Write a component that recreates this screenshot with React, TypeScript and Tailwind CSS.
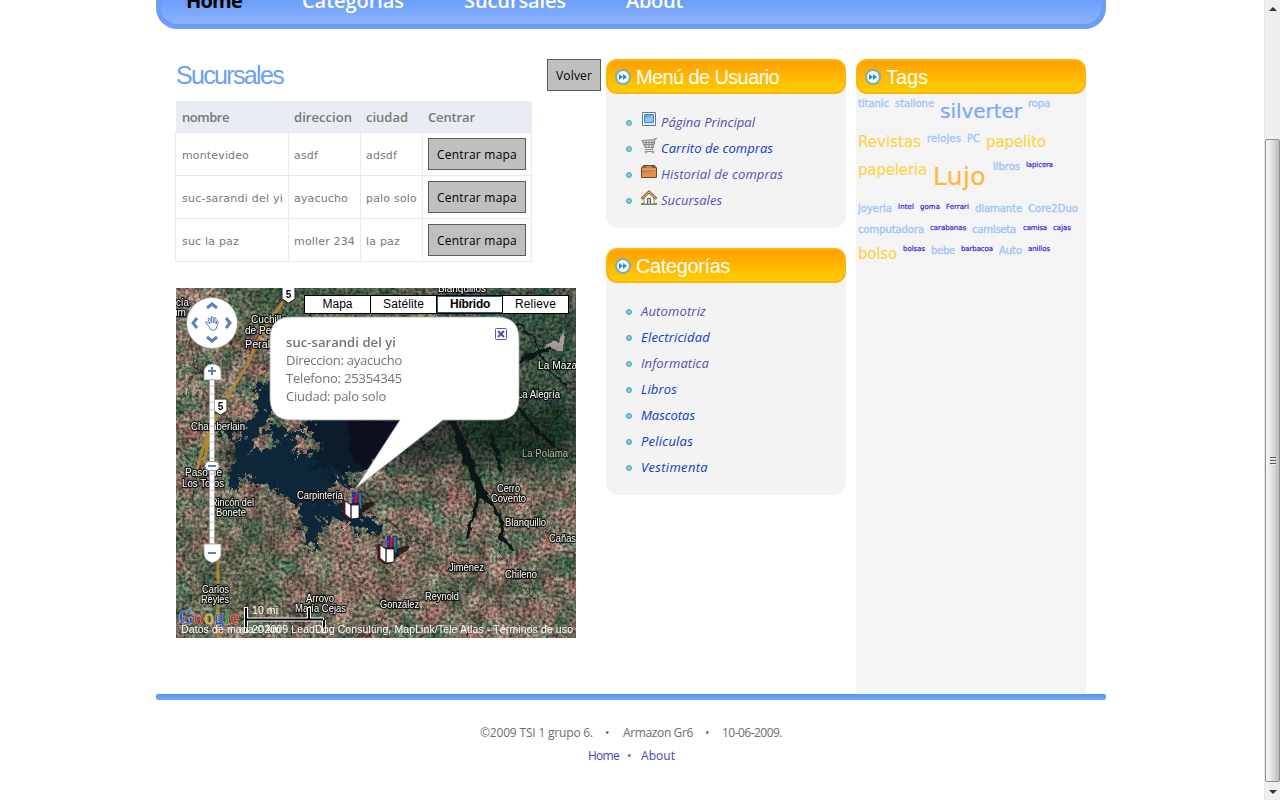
import { useLayoutEffect, useRef, useState } from "react";
import type { ReactNode } from "react";

const HUMAN = "font-['Open_Sans','Noto_Sans',sans-serif]";
const VERDANA = "font-['DejaVu_Sans',sans-serif]";
const ARIAL = "font-['Liberation_Sans',Arial,sans-serif]";

/** Text tracked so that it fills a given width. */
function Fit({ w, children, className = "" }: { w: number; children: string; className?: string }) {
  const ref = useRef<HTMLSpanElement>(null);
  const [spacing, setSpacing] = useState(0);
  useLayoutEffect(() => {
    if (ref.current) {
      const natural = ref.current.getBoundingClientRect().width;
      setSpacing((w - natural) / children.length);
    }
  }, []);
  return (
    <span ref={ref} className={`inline-block whitespace-pre ${className}`} style={{ letterSpacing: `${spacing}px` }}>
      {children}
    </span>
  );
}

function GreyButton({ w, children }: { w: number; children: string }) {
  return (
    <button className={`flex h-8 items-center border border-[#5c5c5c] bg-[#bfbfbf] px-2 pt-[2px] text-[12px] text-black ${HUMAN}`}>
      <Fit w={w}>{children}</Fit>
    </button>
  );
}

const branches = [
  { name: ["montevideo", 67], dir: ["asdf", 24], city: ["adsdf", 31] },
  { name: ["suc-sarandi del yi", 101], dir: ["ayacucho", 54], city: ["palo solo", 51] },
  { name: ["suc la paz", 57], dir: ["moller 234", 61], city: ["la paz", 34] },
] as { name: [string, number]; dir: [string, number]; city: [string, number] }[];

function BranchTable() {
  const cell = "border border-[#e6ebf1] p-0 pt-[5px] pl-[5px]";
  return (
    <table className={`mt-[7px] -ml-px w-[356px] table-fixed border-collapse text-[#7b7773] ${VERDANA}`}>
      <colgroup>
        <col className="w-[113px]" />
        <col className="w-[72px]" />
        <col className="w-[62px]" />
        <col className="w-[109px]" />
      </colgroup>
      <thead>
        <tr className={`h-[31px] bg-[#e8edf4] text-left text-[13px] ${HUMAN}`}>
          <th className="p-0 pt-[3px] pl-[6.5px] font-semibold"><Fit w={47}>nombre</Fit></th>
          <th className="p-0 pt-[3px] pl-[5.5px] font-semibold"><Fit w={58}>direccion</Fit></th>
          <th className="p-0 pt-[3px] pl-[5.5px] font-semibold"><Fit w={42}>ciudad</Fit></th>
          <th className="p-0 pt-[3px] pl-[5.5px] font-semibold"><Fit w={47}>Centrar</Fit></th>
        </tr>
      </thead>
      <tbody>
        {branches.map((b) => (
          <tr key={b.name[0]} className="h-[43px] text-[11px]">
            <td className="border border-[#e6ebf1] p-0 pt-[5px] pl-[6px]"><Fit w={b.name[1]}>{b.name[0]}</Fit></td>
            <td className={cell}><Fit w={b.dir[1]}>{b.dir[0]}</Fit></td>
            <td className={cell}><Fit w={b.city[1]}>{b.city[0]}</Fit></td>
            <td className="border border-[#e6ebf1] p-0 pl-[5px]"><GreyButton w={80}>Centrar mapa</GreyButton></td>
          </tr>
        ))}
      </tbody>
    </table>
  );
}

const places: [string, number, number, number][] = [
  ["cía", 0, 18, 13],
  ["um", -4, 28, 14],
  ["Cuchilla", 75, 35, 36],
  ["de Peralta", 69, 46, 46],
  ["Peralta", 69, 60, 34],
  ["Blanquillos", 262, 4, 48],
  ["La Mazamorra", 362, 81, 66],
  ["La Alegría", 341, 110, 43],
  ["La Polama", 346, 169, 46],
  ["Chamberlain", 15, 142, 54],
  ["Paso de", 9, 188, 37],
  ["Los Toros", 6, 199, 42],
  ["Rincón del", 35, 218, 43],
  ["Bonete", 40, 228, 30],
  ["Carpintería", 121, 211, 46],
  ["Cerro", 321, 204, 23],
  ["Covento", 315, 214, 35],
  ["Blanquillo", 329, 238, 41],
  ["Cañas", 373, 254, 27],
  ["Jiménez", 273, 283, 35],
  ["Chileno", 329, 290, 32],
  ["Reynold", 249, 312, 34],
  ["González", 204, 320, 39],
  ["Carlos", 26, 305, 27],
  ["Reyles", 25, 315, 28],
  ["Arroyo", 130, 314, 28],
  ["María Cejas", 119, 324, 51],
];

function Books({ x, y }: { x: number; y: number }) {
  return (
    <g transform={`translate(${x} ${y})`}>
      <path d="M17 16q5-5 14-5 2 3-6 7l-10 7z" fill="#11100f" opacity=".8" />
      <path d="M9 1h4v16H9z" fill="#1735b8" />
      <path d="M12 3h3v14h-3z" fill="#cc1d22" />
      <path d="M15 1h4v17h-4z" fill="#167d96" stroke="#111" strokeWidth=".7" />
      <path d="M9 7h2M15 5h3" stroke="#a31fc5" strokeWidth="2" />
      <path d="M0 9l7 4 9-1v15l-9 2-7-5z" fill="#8d0a16" stroke="#111" strokeWidth=".7" />
      <path d="M2 10l6 4v14l-6-5zM8 14h8v13l-8 1z" fill="#fff" stroke="#111" strokeWidth=".8" />
    </g>
  );
}

function Shield({ x, y }: { x: number; y: number }) {
  return (
    <g transform={`translate(${x} ${y})`}>
      <path d="M0 1h13v12l-6.5 4L0 13z" fill="#fff" stroke="#222" />
      <text x="6.5" y="12" textAnchor="middle" fontSize="10" fontWeight="700">5</text>
    </g>
  );
}

function Terrain() {
  return (
    <svg className="absolute inset-0 font-['Liberation_Sans',Arial,sans-serif]" width="400" height="350" viewBox="0 0 400 350">
      <defs>
        <filter id="tint" x="0" y="0" width="100%" height="100%" colorInterpolationFilters="sRGB">
          <feTurbulence type="fractalNoise" baseFrequency=".045" numOctaves="6" seed="8" />
          <feColorMatrix values=".6 .05 0 0 .1  .2 .28 0 0 .16  .27 .2 0 0 .11  0 0 0 0 1" />
        </filter>
        <filter id="grain" x="0" y="0" width="100%" height="100%" colorInterpolationFilters="sRGB">
          <feTurbulence type="fractalNoise" baseFrequency=".3" numOctaves="4" seed="3" />
          <feColorMatrix values="2 .5 0 0 -.7  1.6 .9 0 0 -.7  1.8 .5 .2 0 -.7  0 0 0 0 1" />
        </filter>
        <filter id="rough" x="-10%" y="-10%" width="120%" height="120%">
          <feTurbulence type="fractalNoise" baseFrequency=".13" numOctaves="4" seed="5" />
          <feDisplacementMap in="SourceGraphic" scale="26" xChannelSelector="R" yChannelSelector="G" />
        </filter>
        <filter id="thin" x="-20%" y="-20%" width="140%" height="140%">
          <feTurbulence type="fractalNoise" baseFrequency=".1" numOctaves="3" seed="2" />
          <feDisplacementMap in="SourceGraphic" scale="9" xChannelSelector="R" yChannelSelector="G" />
        </filter>
        <filter id="soft" x="-30%" y="-30%" width="160%" height="160%">
          <feGaussianBlur stdDeviation="14" />
        </filter>
        <linearGradient id="goog" x1="0" x2="1">
          <stop offset="0" stopColor="#2457d6" />
          <stop offset=".24" stopColor="#2457d6" />
          <stop offset=".25" stopColor="#d92a22" />
          <stop offset=".42" stopColor="#d92a22" />
          <stop offset=".43" stopColor="#e8b20c" />
          <stop offset=".6" stopColor="#e8b20c" />
          <stop offset=".61" stopColor="#2457d6" />
          <stop offset=".76" stopColor="#2457d6" />
          <stop offset=".77" stopColor="#25a03a" />
          <stop offset=".84" stopColor="#25a03a" />
          <stop offset=".85" stopColor="#d92a22" />
        </linearGradient>
      </defs>
      <rect width="400" height="350" filter="url(#tint)" />
      <g filter="url(#soft)">
        <path d="M260-10H410V185H300z" fill="#0c3022" opacity=".5" />
        <path d="M60-20H240V32H60z" fill="#244e31" opacity=".6" />
        <path d="M210 120h190v45l-190 20z" fill="#071310" opacity=".6" />
        <path d="M15 240h90v100H15z" fill="#304c37" opacity=".35" />
        <path d="M130 255h110v65H130z" fill="#a06e60" opacity=".2" />
      </g>
      <rect width="400" height="350" filter="url(#grain)" opacity=".5" className="mix-blend-overlay" />
      <g filter="url(#rough)">
        <path
          d="M90 96L86 128 72 148 64 172 56 200M58 162L78 178 104 196 128 214M72 176L100 164 118 176 146 168M100 194L138 186 156 196M126 210L134 236 138 258M126 212L152 220 176 232 204 240M116 168L108 150 94 140"
          fill="none" stroke="#0e2637" strokeWidth="14" strokeLinejoin="round"
        />
        <path d="M58 168l26-6 30 8 36-6 24 4-14 20-10 22-14 14-16-6-14-18-26-4-20-14z" fill="#0e2637" />
        <path d="M134 118H232l-5 31-22 27-31 10-21 4-17-16 10-16-14-18z" fill="#0b1d2c" />
        <path d="M60 150L44 142M112 150l14-8M150 176l24 22M140 238l14-10M176 232l10 12M88 112l14-10" fill="none" stroke="#0e2637" strokeWidth="7" />
      </g>
      <path d="M172 132h51l-34 50-14-14z" fill="#080e1b" opacity=".8" filter="url(#thin)" />
      <g filter="url(#thin)" fill="none" stroke="#111815" strokeLinecap="round">
        <path d="M278 133l13 38 15 35" strokeWidth="8" />
        <path d="M304 203l-7 27-5 20M306 206l17 20 3 24 9 10" strokeWidth="4" />
        <path d="M315 148l11 35M270 60l26 12 11-3 32 4 45-14M316 76l23 36 16 25 23 20" strokeWidth="4" />
        <path d="M334 32l23 15 13 30 20 22M231 137l23 23" strokeWidth="2" />
        <path d="M185 224l28 9 22 19 20 8" strokeWidth="1.5" opacity=".6" />
      </g>
      <g fill="none" stroke="#1a201a" opacity=".75" filter="url(#thin)">
        <path d="M20 30l-5 24 4 30-12 27M19 87L36 73M0 160l21 19-4 33M160 190l21 11 12 18" />
        <path d="M85 245l14 12M320 256l20 35 20 20M380 10l20 38M358 100l42 34M111 350l18-35M190 350l24-31" />
      </g>
      <g fill="none" stroke="#b08b32" strokeWidth="3" opacity=".9">
        <path d="M107 14Q80 51 73 74L54 105 34 141 28 175M31 146L20 185M42 262V350" />
      </g>
      <path d="M376 56l8-5 1-10 4 8-3 12-10 1-8-3z" fill="#c9b3b0" opacity=".8" filter="url(#thin)" />
      <g fontSize="10.5" fill="#fff" stroke="#0b0d0b" strokeWidth="2.4" strokeOpacity=".9" paintOrder="stroke">
        {places.map(([t, x, y, w]) => (
          <text key={t} x={x} y={y} textLength={w} lengthAdjust="spacingAndGlyphs" opacity={t === "La Polama" ? 0.6 : 1}>{t}</text>
        ))}
      </g>
      <Shield x={106} y={-2} />
      <Shield x={38} y={110} />
      <Books x={167} y={203} />
      <Books x={202} y={247} />
      <g stroke="#909090">
        <circle cx="36" cy="35" r="25.5" fill="#fff" strokeOpacity=".7" />
        <path d="M28 92V82a9 9 0 0 1 17 0v10z" fill="#fff" strokeOpacity=".7" />
        <rect x="33.5" y="92" width="5" height="164" fill="#fff" strokeOpacity=".5" />
        <path d="M28 256h17v10q0 6-8.500 9-8.500-3-8.500-9z" fill="#fff" strokeOpacity=".7" />
      </g>
      <path d="M34 98h4M34 106h4M34 114h4M34 122h4M34 130h4M34 138h4M34 146h4M34 154h4M34 162h4M34 170h4M34 186h4M34 194h4M34 202h4M34 210h4M34 218h4M34 226h4M34 234h4M34 242h4M34 250h4" stroke="#999" strokeWidth=".6" />
      <rect x="29" y="173.500" width="14" height="9" rx="4" fill="#fff" stroke="#999" />
      <g fill="none" stroke="#5b80c1" strokeWidth="3">
        <path d="M31 20l5-4 5 4M31 49l5 4 5-4M21 30l-4 5 4 5M50 30l4 5-4 5" />
        <path d="M32 83h8M36 79v8M32 265h8M32 178h8" strokeWidth="2" />
        <path d="M34 40l-4-5q-1-2 1-1l3 2-2-5q1-2 2 0l2 4-1-6q2-1 2 1l1 5v-5q2-1 2 1v5l1-3q2 0 1 2l-2 6q-2 3-6 0z" strokeWidth="1" fill="#fff" />
      </g>
      <text x="3" y="336" fontSize="20" textLength="60" lengthAdjust="spacingAndGlyphs" fill="url(#goog)" stroke="#fff" strokeOpacity=".5" strokeWidth="1" paintOrder="stroke" className="font-['Liberation_Serif',serif]">Google</text>
      <g fill="none">
        <path d="M70 319v26M70 331.500h78M133 319v12M148 332v13" stroke="#fff" strokeWidth="4" />
        <path d="M70 320v24M71 331.500h76M133 320v12M148 332v12" stroke="#000" strokeWidth="2" />
      </g>
      <g fill="#fff" fontSize="10.500">
        <text x="76" y="326" textLength="26">10 mi</text>
        <text x="76" y="345" textLength="29">20 km</text>
        <text x="5" y="345" textLength="392">Datos de mapa ©2009 LeadDog Consulting, MapLink/Tele Atlas - Términos de uso</text>
      </g>
      <path d="M116 29H321q22 0 22 22V110q0 22-22 22H267L180 200 224 132H116q-22 0-22-22V51q0-22 22-22z" fill="#fff" stroke="#ababab" strokeWidth=".8" />
      <rect x="319.500" y="40.500" width="11" height="11" rx="1" fill="#fff" stroke="#5657a8" />
      <path d="M322 43l6 6M328 43l-6 6" stroke="#4e4fb4" strokeWidth="2" />
    </svg>
  );
}

function BranchMap() {
  return (
    <div className="relative mt-[26px] h-[350px] w-[400px] overflow-hidden bg-[#55594a]">
      <Terrain />
      <div className={`absolute top-[7px] left-[128px] flex h-[19px] border border-black bg-white text-[12px] text-black ${ARIAL}`}>
        <div className="flex w-[66px] items-center justify-center border-r border-black"><Fit w={30}>Mapa</Fit></div>
        <div className="flex w-[66px] items-center justify-center border-r border-black"><Fit w={41}>Satélite</Fit></div>
        <div className="flex w-[66px] items-center justify-center border border-[#345684] border-r-black font-bold"><Fit w={40}>Híbrido</Fit></div>
        <div className="flex w-[65px] items-center justify-center"><Fit w={41}>Relieve</Fit></div>
      </div>
      <div className={`absolute top-[45px] left-[110px] flex flex-col items-start text-[13px] leading-[18px] text-[#76726e] ${HUMAN}`}>
        <Fit w={110} className="font-semibold">suc-sarandi del yi</Fit>
        <Fit w={116}>Direccion: ayacucho</Fit>
        <Fit w={116}>Telefono: 25354345</Fit>
        <Fit w={100}>Ciudad: palo solo</Fit>
      </div>
    </div>
  );
}

function PanelTitle({ w, children }: { w: number; children: string }) {
  return (
    <h2 className={`flex h-[35px] items-center rounded-[11px] border-2 border-[#ffb30b] bg-linear-to-b from-[#ff9f00] to-[#ffcd03] pl-[7px] text-[20px] text-white ${ARIAL}`}>
      <svg width="16" height="16" viewBox="0 0 16 16" className="mr-[5px]">
        <circle cx="8" cy="8" r="7" fill="#f7fbff" stroke="#76aebb" strokeWidth="2" />
        <path d="M4 5l4 3-4 3zM8 5l4 3-4 3z" fill="#2e8dcc" />
      </svg>
      <Fit w={w}>{children}</Fit>
    </h2>
  );
}

function Bullet() {
  return (
    <svg width="6" height="6" viewBox="0 0 6 6" className="mr-[9px]">
      <circle cx="3" cy="3" r="2.500" fill="#7fcfe8" stroke="#459dcc" />
    </svg>
  );
}

function Item({ w, visited, icon, children }: { w: number; visited?: boolean; icon?: ReactNode; children: string }) {
  return (
    <li className="flex h-[26px] items-center">
      <Bullet />
      {icon && <span className="mr-[4px] mb-[7px] block">{icon}</span>}
      <a className={`text-[13px] italic ${visited ? "text-[#5250b4]" : "text-[#0b3bd0]"} ${HUMAN}`}>
        <Fit w={w}>{children}</Fit>
      </a>
    </li>
  );
}

const pictureIcon = (
  <svg width="16" height="16" viewBox="0 0 16 16">
    <path d="M1.500 .5h13v13h-13z" fill="#fff" stroke="#5079b1" />
    <path d="M3.500 2.500h9v8h-9z" fill="#65a7e5" stroke="#4f82be" />
    <path d="M4 6q4 0 8-3v7H4z" fill="#8dc8f3" />
    <path d="M3 12h10" stroke="#c1c9d8" />
  </svg>
);
const cartIcon = (
  <svg width="16" height="16" viewBox="0 0 16 16" fill="none" stroke="#8b8b8b">
    <path d="M1 2.500l13-1-2 8H4z" fill="#ddd" />
    <path d="M16 .5h-2l-2.500 11H4M2 4.500h11M3 6.500h10M5 2v7M8 2v7M11 2v7" />
    <path d="M4 13.500h9" />
    <circle cx="5" cy="14" r="1" fill="#fff" />
    <circle cx="12" cy="14" r="1" fill="#fff" />
  </svg>
);
const boxIcon = (
  <svg width="16" height="16" viewBox="0 0 16 16">
    <path d="M2.500 1.500h11l2 2.500v9.500H.5V4z" fill="#cc8049" stroke="#7d4225" />
    <path d="M3 2h10l2 2.500H1z" fill="#8d532d" />
    <path d="M1 5h14M5 3h6" stroke="#f1c194" />
    <path d="M1 9q8 0 14-3v7H1z" fill="#e08f4c" />
  </svg>
);
const houseIcon = (
  <svg width="16" height="16" viewBox="0 0 16 16">
    <path d="M0 14h16" stroke="#5d9b42" strokeWidth="2" />
    <path d="M3 7l5-5 5 5v7H3z" fill="#fff" stroke="#8d8175" />
    <path d="M6.500 14V8.500h3V14" fill="#bdc8ce" stroke="#676058" />
    <path d="M1.500 8L8 2l6.500 6" fill="none" stroke="#a16c32" strokeWidth="3" strokeLinecap="round" />
    <path d="M1.500 8L8 2l6.500 6" fill="none" stroke="#dfb77d" />
  </svg>
);

type Tag = [text: string, width: number, kind: "s" | "m" | "l" | "xl" | "xs", gap: number, top: number];

const tagKinds = {
  xs: "text-[7px] leading-[9px] text-[#3425d5] [-webkit-text-stroke:0.2px]",
  s: "text-[10px] leading-[12px] text-[#a5c5f5] [-webkit-text-stroke:0.4px]",
  m: "text-[15px] leading-[18px] text-[#fbd64c] [-webkit-text-stroke:0.2px]",
  l: "text-[20px] leading-[24px] text-[#7aa7f8] [-webkit-text-stroke:0.2px]",
  xl: "text-[25px] leading-[30px] text-[#fdb83c] [-webkit-text-stroke:0.2px]",
};

const tagRows: { height: string; tags: Tag[] }[] = [
  { height: "h-[39px]", tags: [["titanic", 31, "s", 0, 4], ["stallone", 39, "s", 6, 4], ["silverter", 82, "l", 6, 5], ["ropa", 22, "s", 6, 4]] },
  { height: "h-[28px]", tags: [["Revistas", 63, "m", 0, 0], ["relojes", 34, "s", 6, 0], ["PC", 13, "s", 6, 0], ["papelito", 60, "m", 6, 0]] },
  { height: "h-[42px]", tags: [["papeleria", 69, "m", 0, 0], ["Lujo", 53, "xl", 6, 1], ["libros", 27, "s", 7, 0], ["lapicera", 27, "xs", 6, 0]] },
  { height: "h-[21px]", tags: [["joyeria", 34, "s", 0, 0], ["Intel", 16, "xs", 6, 0], ["goma", 20, "xs", 6, 0], ["Ferrari", 23, "xs", 6, 0], ["diamante", 47, "s", 6, 0], ["Core2Duo", 50, "s", 6, 0]] },
  { height: "h-[21px]", tags: [["computadora", 66, "s", 0, 0], ["carabanas", 36, "xs", 6, 0], ["camiseta", 44, "s", 6, 0], ["camisa", 24, "xs", 7, 0], ["cajas", 18, "xs", 6, 0]] },
  { height: "h-[28px]", tags: [["bolso", 39, "m", 0, 0], ["bolsas", 22, "xs", 6, 0], ["bebe", 24, "s", 6, 0], ["barbacoa", 32, "xs", 6, 0], ["Auto", 23, "s", 6, 0], ["anillos", 22, "xs", 6, 0]] },
];

function TagCloud() {
  return (
    <div className={`flex flex-col pl-[2px] ${VERDANA}`}>
      {tagRows.map((row, i) => (
        <div key={i} className={`flex items-start ${row.height}`}>
          {row.tags.map(([t, w, kind, gap, top]) => (
            <a key={t} className={`block ${tagKinds[kind]}`} style={{ marginLeft: gap, marginTop: top }}>
              <Fit w={w} className="align-top">{t}</Fit>
            </a>
          ))}
        </div>
      ))}
    </div>
  );
}

function Scrollbar() {
  return (
    <div className="flex h-full w-4 shrink-0 flex-col border-l border-[#e6e6e6] bg-[#efefef]">
      <div className="flex h-[139px] justify-center pt-[7px]">
        <svg width="8" height="4" viewBox="0 0 8 4"><path d="M0 4l4-4 4 4z" fill="#333" /></svg>
      </div>
      <div className="flex h-[643px] items-center justify-center rounded-[2px] border border-[#8e8e8e] bg-linear-to-r from-[#f8f8f8] via-[#dedede] to-[#bcbcbc]">
        <div className="flex w-[6px] flex-col gap-[1px]">
          <i className="h-[2px] border-b border-[#eee] bg-[#555]" />
          <i className="h-[2px] border-b border-[#eee] bg-[#555]" />
          <i className="h-[2px] border-b border-[#eee] bg-[#555]" />
        </div>
      </div>
      <div className="flex h-[18px] justify-center pt-[8px]">
        <svg width="8" height="4" viewBox="0 0 8 4"><path d="M0 0h8L4 4z" fill="#333" /></svg>
      </div>
    </div>
  );
}

export default function App() {
  return (
    <div className="flex h-[800px] w-[1280px] overflow-hidden bg-white">
      <div className="flex-1 pl-[156px]">
        <nav className={`flex h-[29px] w-[950px] gap-[60px] overflow-hidden rounded-b-[21px] border-x-[5px] border-b-[5px] border-[#699df8] bg-linear-to-b from-[#6b9ef9] to-[#8bb3ff] pl-[25px] text-[20px] leading-[24px] font-semibold text-white ${HUMAN}`}>
          <Fit w={56} className="-mt-[11px] font-bold text-black">Home</Fit>
          <Fit w={102} className="-mt-[11px]">Categorias</Fit>
          <Fit w={102} className="-mt-[11px]">Sucursales</Fit>
          <Fit w={57} className="-mt-[11px]">About</Fit>
        </nav>
        <div className="flex h-[665px] pt-[30px]">
          <main className="w-[450px] pl-5">
            <div className="flex h-[35px] items-start justify-between pr-[5px]">
              <h1 className={`pt-[2px] text-[25px] leading-[28px] text-[#6c9ff5] ${ARIAL}`}><Fit w={107}>Sucursales</Fit></h1>
              <GreyButton w={36}>Volver</GreyButton>
            </div>
            <BranchTable />
            <BranchMap />
          </main>
          <div className="flex w-[240px] flex-col gap-5">
            <section className="h-[169px] rounded-[13px] bg-[#f3f3f3]">
              <PanelTitle w={143}>Menú de Usuario</PanelTitle>
              <ul className="pt-[16px] pl-[20px]">
                <Item w={94} visited icon={pictureIcon}>Página Principal</Item>
                <Item w={112} icon={cartIcon}>Carrito de compras</Item>
                <Item w={122} visited icon={boxIcon}>Historial de compras</Item>
                <Item w={61} visited icon={houseIcon}>Sucursales</Item>
              </ul>
            </section>
            <section className="h-[247px] rounded-[13px] bg-[#f3f3f3]">
              <PanelTitle w={94}>Categorías</PanelTitle>
              <ul className="pt-[16px] pl-[20px]">
                <Item w={65} visited>Automotriz</Item>
                <Item w={69}>Electricidad</Item>
                <Item w={68} visited>Informatica</Item>
                <Item w={36}>Libros</Item>
                <Item w={54}>Mascotas</Item>
                <Item w={52}>Peliculas</Item>
                <Item w={67}>Vestimenta</Item>
              </ul>
            </section>
          </div>
          <aside className="ml-[10px] w-[230px] rounded-t-[13px] bg-[#f4f4f4]">
            <PanelTitle w={42}>Tags</PanelTitle>
            <TagCloud />
          </aside>
        </div>
        <footer className={`w-[950px] text-[12px] text-[#706d69] ${HUMAN}`}>
          <div className="h-[6px] rounded-[2px] bg-linear-to-b from-[#5994ee] to-[#74a8ff]" />
          <p className="mt-[24px] flex h-[18px] items-center pl-[324px]">
            <Fit w={113}>©2009 TSI 1 grupo 6.</Fit>
            <Fit w={6} className="ml-[12px]">•</Fit>
            <Fit w={70} className="ml-[12px]">Armazon Gr6</Fit>
            <Fit w={6} className="ml-[12px]">•</Fit>
            <Fit w={60} className="ml-[11px]">10-06-2009.</Fit>
          </p>
          <p className="mt-[5px] flex h-[18px] items-center pl-[432px] text-[#4845b7]">
            <Fit w={31}>Home</Fit>
            <Fit w={6} className="ml-[8px] text-[#706d69]">•</Fit>
            <Fit w={34} className="ml-[8px]">About</Fit>
          </p>
        </footer>
      </div>
      <Scrollbar />
    </div>
  );
}
